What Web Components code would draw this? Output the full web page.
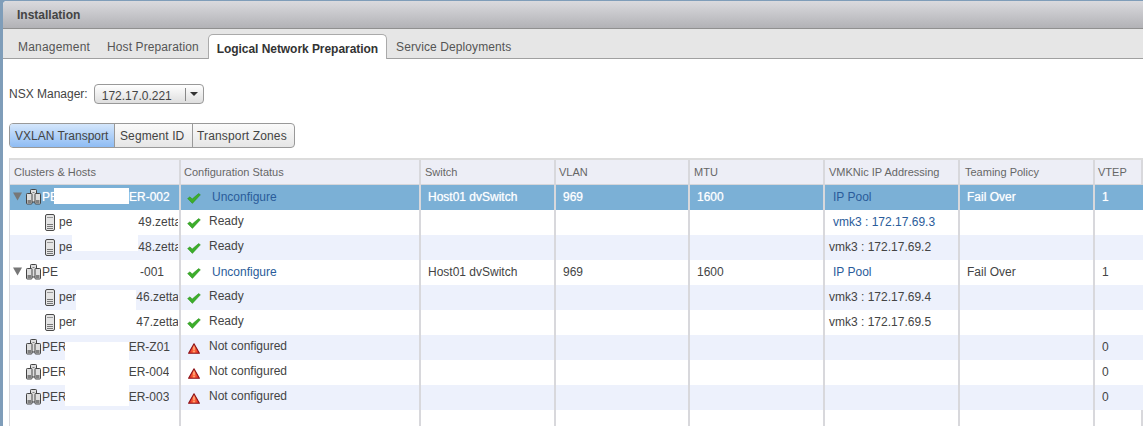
<!DOCTYPE html>
<html>
<head>
<meta charset="utf-8">
<title>Installation</title>
<style>
  html,body{margin:0;height:100%;overflow:hidden;background:#fff;}
  body{font:12px "Liberation Sans",Arial,sans-serif;color:#333;}
</style>
</head>
<body>
<install-panel>
  <nsx-tabs></nsx-tabs>
  <manager-select></manager-select>
  <sub-tabs></sub-tabs>
  <host-grid></host-grid>
</install-panel>

<script>
// small icons, shared by the grid
const ICONS = {
  check:`<svg width="14" height="11" viewBox="0 0 14 11"><path d="M.6 5.6 L3 3.8 L5.2 6 L11.6 .6 L13.4 1.800 L5.4 10.400 Z" fill="#3cae2a" stroke="#2a8c1e" stroke-width=".5"/></svg>`,
  warn:`<svg width="13" height="11" viewBox="0 0 13 11"><defs><linearGradient id="w" x1="0" x2="1" y1="0" y2="0"><stop offset="0" stop-color="#e0101a"/><stop offset=".5" stop-color="#ff7a40"/><stop offset="1" stop-color="#e0101a"/></linearGradient></defs><path d="M7 .8 L12.400 10.200 H1.600 Z" fill="url(#w)" stroke="#8c1218" stroke-width="1.100" stroke-linejoin="round"/><rect x="6.500" y="3.600" width="1" height="3.600" fill="#ffc8a8"/><rect x="6.500" y="8" width="1" height="1.200" fill="#ffc8a8"/></svg>`,
  arrow:`<svg width="9" height="9" viewBox="0 0 9 9"><path d="M0 .5 H9 L4.500 8.500 Z" fill="#777"/></svg>`,
  cluster:`<svg width="15" height="16" viewBox="0 0 15 16"><g fill="#dedede" stroke="#444"><rect x="4.500" y=".5" width="6" height="12.500" rx=".8"/><rect x=".5" y="4.500" width="5.500" height="10.500" rx=".8"/><rect x="9" y="4.500" width="5.500" height="10.500" rx=".8"/></g><g fill="#808080"><rect x="1.500" y="11" width="3.500" height="3"/><rect x="10" y="11" width="3.500" height="3"/><rect x="6.500" y="3" width="2" height="1"/></g></svg>`,
  host:`<svg width="10" height="17" viewBox="0 0 10 17"><rect x=".5" y=".5" width="9" height="16" rx="1.500" fill="#e4e4e4" stroke="#4a4a4a"/><rect x="2" y="3" width="6" height="1" fill="#999"/><rect x="2" y="10" width="6" height="1" fill="#777"/><rect x="2" y="12" width="6" height="1" fill="#777"/><rect x="2" y="14" width="6" height="1" fill="#777"/></svg>`
};

class InstallPanel extends HTMLElement{
  constructor(){
    super();
    this.attachShadow({mode:'open'});
    this.shadowRoot.innerHTML = `
    <style>
      :host{display:block;height:426px;box-sizing:border-box;background:#7f9db9;padding:1px 0 0 3px;}
      #inner{height:100%;background:#fff;border-top-left-radius:4px;overflow:hidden;}
      #title{height:28px;box-sizing:border-box;padding:7px 0 0 14px;font-weight:bold;font-size:12px;color:#444;
        background:linear-gradient(#dadade,#b2b2b6);border-bottom:1px solid #909090;}
    </style>
    <div id="inner">
      <div id="title">Installation</div>
      <slot></slot>
    </div>`;
  }
}

class NsxTabs extends HTMLElement{
  constructor(){
    super();
    this.attachShadow({mode:'open'});
    this.shadowRoot.innerHTML = `
    <style>
      :host{display:flex;height:30px;box-sizing:border-box;padding:5px 0 0 6px;align-items:stretch;
        background:#e6e6e6;border-bottom:1px solid #a0a0a0;font-size:12px;color:#555;}
      div{padding:6px 9px 0;letter-spacing:.1px;}
      #mg{letter-spacing:.2px;padding-right:8px;}
      .on{background:#fff;color:#333;font-weight:bold;border:1px solid #aaa;border-bottom:0;border-radius:5px 5px 0 0;
        margin-bottom:-1px;padding:7px 8px 0;letter-spacing:-.05px;}
    </style>
    <div id="mg">Management</div><div>Host Preparation</div><div class="on">Logical Network Preparation</div><div>Service Deployments</div>`;
  }
}

class ManagerSelect extends HTMLElement{
  constructor(){
    super();
    this.attachShadow({mode:'open'});
    this.shadowRoot.innerHTML = `
    <style>
      :host{display:flex;align-items:center;height:20px;margin:25px 0 0 6px;font-size:12px;color:#444;}
      #box{display:flex;align-items:center;height:20px;box-sizing:border-box;margin-left:6px;border:1px solid #999;border-radius:4px;
        background:linear-gradient(#fff,#dedede);color:#444;}
      #val{padding:3px 0 0 7px;width:90px;box-sizing:border-box;white-space:nowrap;}
      #btn{width:17px;height:13px;border-left:1px solid #888;display:flex;align-items:center;justify-content:center;}
      #btn i{border:4px solid transparent;border-top:4px solid #333;border-bottom:0;}
    </style>
    NSX Manager:
    <div id="box"><div id="val">172.17.0.221</div><div id="btn"><i></i></div></div>`;
  }
}

class SubTabs extends HTMLElement{
  constructor(){
    super();
    this.attachShadow({mode:'open'});
    this.shadowRoot.innerHTML = `
    <style>
      :host{display:flex;width:286px;height:25px;box-sizing:border-box;margin:19px 0 0 6px;border:1px solid #999;border-radius:4px;
        font-size:12px;color:#444;background:linear-gradient(#fafafa,#e6e6e6);overflow:hidden;}
      div{display:flex;align-items:center;box-sizing:border-box;border-left:1px solid #999;letter-spacing:.1px;}
      .on{border-left:0;width:104px;padding-left:5px;letter-spacing:0;background:linear-gradient(#d4e6fb,#8ebcf4);}
      #seg{width:78px;padding-left:5px;}
      #zon{flex:1;padding-left:4px;letter-spacing:.15px;}
    </style>
    <div class="on">VXLAN Transport</div><div id="seg">Segment ID</div><div id="zon">Transport Zones</div>`;
  }
}

const COLS = '171px 240px 135px 134px 135px 135px 135px 1fr';

class GridRow extends HTMLElement{
  constructor(){
    super();
    this.attachShadow({mode:'open'});
    this.shadowRoot.innerHTML = `
    <style>
      :host{display:grid;grid-template-columns:${COLS};height:25px;color:#444;font-size:12px;background:#fff;}
      :host([kind=alt]){background:#edf1fc;}
      :host([kind=sel]){background:#7bb0d6;color:#fff;text-shadow:0 0 1px rgba(255,255,255,.7);}
      ::slotted(*){display:flex;align-items:center;min-width:0;overflow:hidden;white-space:nowrap;box-sizing:border-box;
        height:25px;padding:0 0 2px 7px;border-right:2px solid #d8d8dc;}
    </style>
    <slot></slot>`;
  }
}

class HostGrid extends HTMLElement{
  constructor(){
    super();
    this.attachShadow({mode:'open'});
    const head = ['Clusters &amp; Hosts','Configuration Status','Switch','VLAN','MTU','VMKNic IP Addressing','Teaming Policy','VTEP'];
    // blot = [margin-left, width, margin-top, height] of the white patch over the name
    const rows = [
      {kind:'sel',tree:1,a:'PE',blot:[-4,75,3,16],b:'ER-002',st:'check',status:'Unconfigure',link:1,sw:'Host01 dvSwitch',vlan:'969',mtu:'1600',ip:'IP Pool',ipLink:1,team:'Fail Over',vtep:'1'},
      {kind:'',host:1,a:'pe',blot:[0,66,0,25],b:'49.zettag',st:'check',status:'Ready',ip:'vmk3 : 172.17.69.3',ipLink:1},
      {kind:'alt',host:1,a:'pe',blot:[0,66,0,16],b:'48.zettag',st:'check',status:'Ready',ip:'vmk3 : 172.17.69.2'},
      {kind:'',tree:1,a:'PE',blot:[0,82,0,25],b:'-001',st:'check',status:'Unconfigure',link:1,sw:'Host01 dvSwitch',vlan:'969',mtu:'1600',ip:'IP Pool',ipLink:1,team:'Fail Over',vtep:'1'},
      {kind:'alt',host:1,a:'per',blot:[0,60,5,20],b:'46.zettag',st:'check',status:'Ready',ip:'vmk3 : 172.17.69.4'},
      {kind:'',host:1,a:'per',blot:[0,60,0,25],b:'47.zettag',st:'check',status:'Ready',ip:'vmk3 : 172.17.69.5'},
      {kind:'alt',a:'PER',blot:[-2,64,7,18],b:'ER-Z01',st:'warn',status:'Not configured',vtep:'0'},
      {kind:'',a:'PER',blot:[-2,64,0,25],b:'ER-004',st:'warn',status:'Not configured',vtep:'0'},
      {kind:'alt',a:'PER',blot:[-2,64,0,21],b:'ER-003',st:'warn',status:'Not configured',vtep:'0'}
    ];
    const name = r => {
      let lead = '';
      if(r.host) lead = `<span class="hostic">${ICONS.host}</span>`;
      else lead = `<span class="tw">${r.tree?ICONS.arrow:''}</span><span class="clu">${ICONS.cluster}</span>`;
      const b = r.blot;
      return `<div class="name">${lead}<span>${r.a}</span><i class="blot" style="margin-left:${b[0]}px;width:${b[1]}px;margin-top:${b[2]}px;height:${b[3]}px"></i><span class="rest">${r.b}</span></div>`;
    };
    const body = rows.map(r=>`<grid-row kind="${r.kind}">
        ${name(r)}
        <div class="st"><span class="sic">${ICONS[r.st]}</span><span class="${r.link?'link ul':'plain'}">${r.status}</span></div>
        <div>${r.sw||''}</div><div>${r.vlan||''}</div><div>${r.mtu||''}</div>
        <div class="ip"><span class="${r.ipLink?'link in':''}">${r.ip||''}</span></div>
        <div>${r.team||''}</div><div class="last">${r.vtep||''}</div>
      </grid-row>`).join('');
    this.shadowRoot.innerHTML = `
    <style>
      :host{display:block;margin:10px 0 0 6px;height:270px;border-left:1px solid #d8d8dc;border-top:2px solid #dcdcdc;}
      #head{display:grid;grid-template-columns:${COLS};height:24px;background:#edeef6;border-bottom:1px solid #d6d6da;font-size:11px;color:#666;}
      #head div{display:flex;align-items:center;padding-left:4px;border-right:2px solid #d8d8dc;box-sizing:border-box;}
      #head div:nth-child(2),#head div:nth-child(4),#head div:nth-child(8){padding-left:3px;}
      #head div:nth-child(7){padding-left:5px;}
      #fill{display:grid;grid-template-columns:${COLS};height:20px;}
      #fill div{border-right:2px solid #d8d8dc;}
      .name{padding:0 1px 2px 3px !important;}
      .tw{width:13px;flex:none;display:flex;}
      .clu{width:16px;flex:none;display:flex;margin-top:1px;}
      .hostic{flex:none;margin-left:32px;margin-right:4px;display:flex;margin-top:2px;}
      .blot{flex:none;align-self:flex-start;background:#fff;display:block;}
      .rest{flex:0 1 auto;min-width:0;overflow:hidden;}
      .st{padding-left:6px !important;}
      .sic{flex:none;display:flex;width:22px;padding-top:3px;}
      .plain{margin-top:-1px;}
      .link{color:#2a5c9a;text-shadow:none;}
      .link.ul{margin-left:3px;}
      .link.in{margin-left:4px;}
      .ip{padding-left:4px !important;}
      .last{border-right:0 !important;}
    </style>
    <div id="head">${head.map(h=>`<div>${h}</div>`).join('')}</div>
    <div id="rows">${body}</div>
    <div id="fill"><div></div><div></div><div></div><div></div><div></div><div></div><div></div><div></div></div>`;
  }
}

customElements.define('grid-row',GridRow);
customElements.define('install-panel',InstallPanel);
customElements.define('nsx-tabs',NsxTabs);
customElements.define('manager-select',ManagerSelect);
customElements.define('sub-tabs',SubTabs);
customElements.define('host-grid',HostGrid);
</script>
</body>
</html>
